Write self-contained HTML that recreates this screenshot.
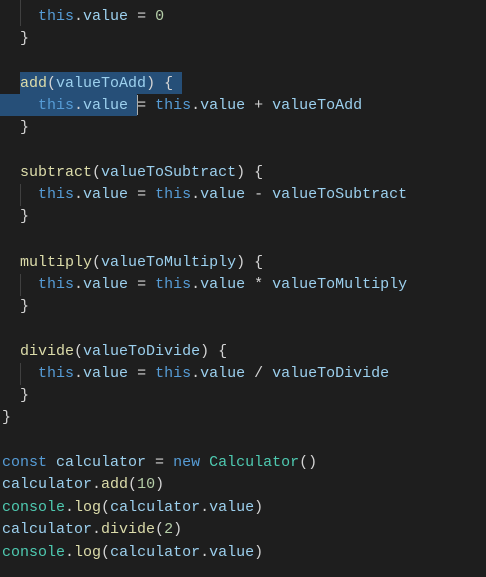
<!DOCTYPE html>
<html><head><style>
body{margin:0;background:#1e1e1e;width:486px;height:577px;overflow:hidden;position:relative}
.l{position:absolute;left:2px;font:15px/22px "Liberation Mono",monospace;color:#d4d4d4;white-space:pre;height:22px}
.k{color:#569cd6}.v{color:#9cd0ee}.f{color:#dcdcaa}.c{color:#4ec9b0}.n{color:#b5cea8}
.sel{position:absolute;background:#264f78}
.g{position:absolute;left:20px;width:1px;background:#404040}
</style></head><body>
<div class="sel" style="left:20px;top:72px;width:162px;height:22px"></div>
<div class="sel" style="left:0;top:94px;width:137px;height:22px"></div>
<div style="position:absolute;left:137px;top:95px;width:1px;height:20px;background:#aeafad"></div>
<div class="g" style="top:0;height:26px"></div>
<div class="g" style="top:184px;height:22px"></div>
<div class="g" style="top:274px;height:22px"></div>
<div class="g" style="top:363px;height:22px"></div>
<div class="l" style="top:6px">    <span class="k">this</span>.<span class="v">value</span> = <span class="n">0</span></div>
<div class="l" style="top:28px">  }</div>
<div class="l" style="top:73px">  <span class="f">add</span>(<span class="v">valueToAdd</span>) {</div>
<div class="l" style="top:95px">    <span class="k">this</span>.<span class="v">value</span> = <span class="k">this</span>.<span class="v">value</span> + <span class="v">valueToAdd</span></div>
<div class="l" style="top:117px">  }</div>
<div class="l" style="top:162px">  <span class="f">subtract</span>(<span class="v">valueToSubtract</span>) {</div>
<div class="l" style="top:184px">    <span class="k">this</span>.<span class="v">value</span> = <span class="k">this</span>.<span class="v">value</span> - <span class="v">valueToSubtract</span></div>
<div class="l" style="top:206px">  }</div>
<div class="l" style="top:252px">  <span class="f">multiply</span>(<span class="v">valueToMultiply</span>) {</div>
<div class="l" style="top:274px">    <span class="k">this</span>.<span class="v">value</span> = <span class="k">this</span>.<span class="v">value</span> * <span class="v">valueToMultiply</span></div>
<div class="l" style="top:296px">  }</div>
<div class="l" style="top:341px">  <span class="f">divide</span>(<span class="v">valueToDivide</span>) {</div>
<div class="l" style="top:363px">    <span class="k">this</span>.<span class="v">value</span> = <span class="k">this</span>.<span class="v">value</span> / <span class="v">valueToDivide</span></div>
<div class="l" style="top:385px">  }</div>
<div class="l" style="top:407px">}</div>
<div class="l" style="top:452px"><span class="k">const</span> <span class="v">calculator</span> = <span class="k">new</span> <span class="c">Calculator</span>()</div>
<div class="l" style="top:474px"><span class="v">calculator</span>.<span class="f">add</span>(<span class="n">10</span>)</div>
<div class="l" style="top:497px"><span class="c">console</span>.<span class="f">log</span>(<span class="v">calculator</span>.<span class="v">value</span>)</div>
<div class="l" style="top:519px"><span class="v">calculator</span>.<span class="f">divide</span>(<span class="n">2</span>)</div>
<div class="l" style="top:542px"><span class="c">console</span>.<span class="f">log</span>(<span class="v">calculator</span>.<span class="v">value</span>)</div>
</body></html>
